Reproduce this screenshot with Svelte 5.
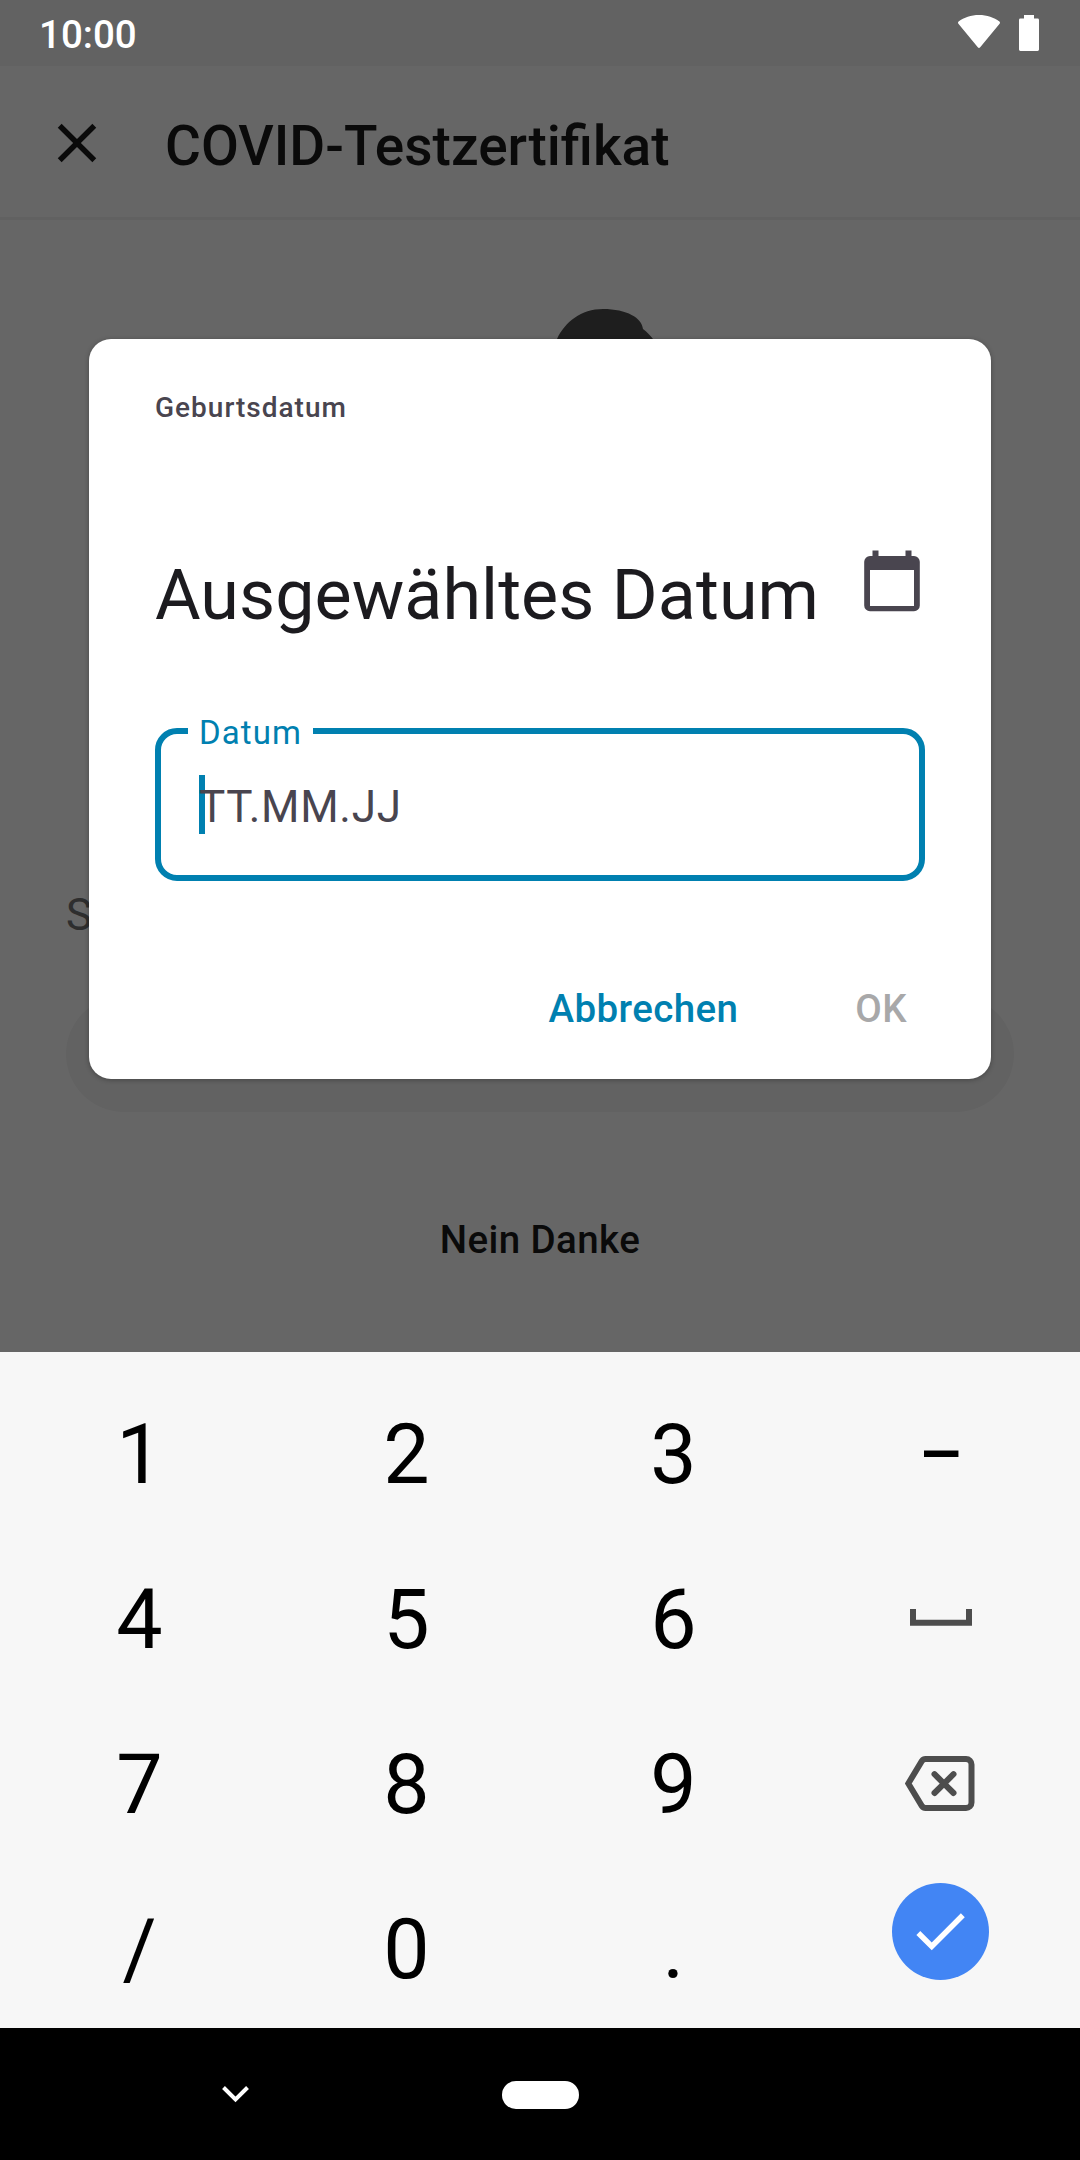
<script>
  const keys = [
    '1', '2', '3', '–',
    '4', '5', '6', 'space',
    '7', '8', '9', 'backspace',
    '/', '0', '.', 'done'
  ];
</script>

<div class="screen">
  <div class="app">
    <div class="status-bg"></div>
    <header class="app-bar">
      <svg class="close" viewBox="0 0 24 24">
        <path d="M19 6.41 17.59 5 12 10.59 6.41 5 5 6.41 10.59 12 5 17.59 6.41 19 12 13.41 17.59 19 19 17.59 13.41 12z" />
      </svg>
      <h1>COVID-Testzertifikat</h1>
    </header>
    <main>
      <svg class="illustration" viewBox="0 0 96 60">
        <path d="M0 30C8 13 24 0 46 0c24 0 39 9 40 20 4 3 7 6 10 10v30H0z" />
      </svg>
      <p class="hint">S</p>
      <div class="primary"></div>
      <button class="decline">Nein Danke</button>
    </main>
    <div class="scrim"></div>
  </div>

  <section class="keyboard">
    {#each keys as key}
      <div class="key" class:dash={key === '–'}>
        {#if key === 'space'}
          <svg class="space" viewBox="0 0 62 17">
            <path d="M3 0v13.8h56V0" />
          </svg>
        {:else if key === 'backspace'}
          <svg class="backspace" viewBox="0 0 70 55">
            <path d="M20.500 3h40.500a5.500 5.500 0 0 1 5.500 5.500v38a5.500 5.500 0 0 1-5.500 5.500H20.500q-2.200 0-3.600-2L3.300 27.500 16.900 5Q18.300 3 20.500 3z" />
            <path class="cross" d="m29.500 18.200 19 18.800m0-18.800-19 18.800" />
          </svg>
        {:else if key === 'done'}
          <span class="done">
            <svg viewBox="0 0 24 24"><path d="M9 16.170 4.830 12l-1.420 1.410L9 19 21 7l-1.410-1.410z" /></svg>
          </span>
        {:else}
          {key}
        {/if}
      </div>
    {/each}
  </section>

  <nav>
    <svg class="chevron" viewBox="0 0 27 17"><path d="m1.500 1.500 12 12 12-12" /></svg>
    <span class="home"></span>
  </nav>

  <div class="status">
    <span>10:00</span>
    <div class="indicators">
      <svg class="wifi" viewBox="0 0 42 33">
        <path d="M.6 6.500C6 2.500 13 0 21 0s15 2.500 20.400 6.500c.7.600.8 1.500.2 2.200L22.200 32.200c-.7.900-1.700.9-2.400 0L.4 8.700C-.2 8-.1 7.100.6 6.500z" />
      </svg>
      <svg class="battery" viewBox="0 0 20 36">
        <path d="M5 0h10v3.500h3.600q1.400 0 1.400 1.400v29.700q0 1.400-1.400 1.400H1.400Q0 36 0 34.600V4.900q0-1.400 1.400-1.400H5z" />
      </svg>
    </div>
  </div>

  <div class="dialog">
    <div class="overline">Geburtsdatum</div>
    <div class="headline">
      <h2>Ausgewähltes Datum</h2>
      <svg class="calendar" viewBox="0 0 56 62">
        <path fill-rule="evenodd" d="M8.500.5h6v5.500h27V.5h6v5.500H50a5.800 5.800 0 0 1 5.800 5.800V55.500a5.800 5.800 0 0 1-5.800 5.800H6A5.800 5.800 0 0 1 .2 55.500V11.800A5.800 5.800 0 0 1 6 6h2.500zM6 20v36h44V20z" />
      </svg>
    </div>
    <div class="field">
      <span class="label">Datum</span>
      <span class="caret"></span>
      <span class="placeholder">TT.MM.JJ</span>
    </div>
    <div class="actions">
      <button class="cancel">Abbrechen</button>
      <button class="ok" disabled>OK</button>
    </div>
  </div>
</div>

<style>
  :global(body) {
    margin: 0;
    background: #000;
  }

  .screen {
    position: relative;
    display: flex;
    flex-direction: column;
    width: 1080px;
    height: 2160px;
    overflow: hidden;
    font-family: Roboto, sans-serif;
  }

  h1, h2, p {
    margin: 0;
  }

  svg {
    display: block;
    flex: none;
  }

  button {
    padding: 0;
    border: 0;
    background: none;
    font: 500 38.5px/46px Roboto, sans-serif;
    letter-spacing: 0.4px;
  }

  .app {
    position: relative;
    display: flex;
    flex-direction: column;
    height: 1352px;
    background: #fff;
  }

  .status-bg {
    height: 66px;
    background: #f5f5f5;
  }

  .app-bar {
    display: flex;
    box-sizing: border-box;
    height: 154px;
    padding: 44px 44px 0;
    border-bottom: 3px solid #f3f3f3;
    color: #1a1a1a;
  }

  .close {
    width: 66px;
    height: 66px;
    fill: #1a1a1a;
  }

  h1 {
    margin: 3px 0 0 55px;
    font-size: 55px;
    font-weight: 500;
    line-height: 66px;
  }

  main {
    display: flex;
    flex-direction: column;
    padding: 89px 66px 0;
  }

  .illustration {
    width: 96px;
    height: 60px;
    margin-left: 491px;
    fill: #4d4d4d;
  }

  .hint {
    margin-top: 520px;
    color: #737373;
    font-size: 44px;
    line-height: 52px;
  }

  .primary {
    height: 116px;
    margin-top: 55px;
    border-radius: 58px;
    background: #f5f5f5;
  }

  .decline {
    align-self: center;
    margin-top: 105px;
    color: #1a1a1a;
  }

  .scrim {
    position: absolute;
    inset: 0;
    background: rgba(0, 0, 0, 0.6);
  }

  .keyboard {
    display: grid;
    grid-template-columns: repeat(4, 267px);
    grid-template-rows: repeat(4, 165px);
    box-sizing: border-box;
    height: 676px;
    padding: 20px 6px 0;
    background: #f7f7f7;
  }

  .key {
    display: flex;
    align-items: center;
    justify-content: center;
    color: #000;
    font-size: 82.5px;
    line-height: 97px;
  }

  .dash {
    padding-left: 1px;
    font-size: 69px;
    font-weight: 500;
  }

  .space {
    width: 62px;
    height: 17px;
    margin-top: -5px;
    fill: none;
    stroke: #4d4d4d;
    stroke-width: 6;
  }

  .backspace {
    width: 70px;
    height: 55px;
    margin: 0 2px 2px 0;
    fill: none;
    stroke: #4d4d4d;
    stroke-width: 6;
  }

  .cross {
    stroke-linecap: round;
  }

  .done {
    display: flex;
    align-items: center;
    justify-content: center;
    width: 97px;
    height: 97px;
    margin-bottom: 37px;
    border-radius: 50%;
    background: #4285f4;
  }

  .done svg {
    width: 66px;
    height: 66px;
    margin-right: 1px;
    fill: #fff;
  }

  nav {
    display: flex;
    align-items: center;
    box-sizing: border-box;
    height: 132px;
    padding-left: 222px;
    background: #000;
  }

  .chevron {
    width: 27px;
    height: 17px;
    fill: none;
    stroke: #fff;
    stroke-width: 4;
  }

  .home {
    width: 77px;
    height: 28px;
    margin: 1px 0 0 253px;
    border-radius: 14px;
    background: #fff;
  }

  .status {
    position: absolute;
    top: 0;
    left: 0;
    display: flex;
    justify-content: space-between;
    box-sizing: border-box;
    width: 100%;
    height: 66px;
    padding: 0 41px 0 39px;
    color: #fff;
    font-size: 38.5px;
    font-weight: 500;
    line-height: 69px;
  }

  .indicators {
    display: flex;
    gap: 19px;
    padding-top: 15px;
    fill: #fff;
  }

  .wifi {
    width: 42px;
    height: 33px;
  }

  .battery {
    width: 20px;
    height: 36px;
  }

  .dialog {
    position: absolute;
    top: 339px;
    left: 89px;
    display: flex;
    flex-direction: column;
    box-sizing: border-box;
    width: 902px;
    height: 740px;
    padding: 51px 66px 0;
    border-radius: 22px;
    background: #fff;
    box-shadow: 0 1px 5px rgba(0, 0, 0, 0.3);
  }

  .overline {
    color: #49454f;
    font-size: 28px;
    font-weight: 500;
    letter-spacing: 1px;
    line-height: 36px;
  }

  .headline {
    display: flex;
    justify-content: space-between;
    height: 82px;
    margin-top: 124px;
    padding-right: 5px;
  }

  h2 {
    margin-top: 4px;
    color: #1c1b1f;
    font-size: 70px;
    font-weight: 400;
    letter-spacing: 0.05px;
    line-height: 82px;
    white-space: nowrap;
  }

  .calendar {
    width: 56px;
    height: 62px;
    fill: #49454f;
  }

  .field {
    position: relative;
    box-sizing: border-box;
    height: 153px;
    margin-top: 96px;
    padding: 47px 0 0 38px;
    border: 6px solid #0080b0;
    border-radius: 22px;
    color: #49454f;
    font-size: 44px;
    letter-spacing: 0.75px;
    line-height: 52px;
  }

  .label {
    position: absolute;
    top: -21px;
    left: 27px;
    box-sizing: border-box;
    width: 125px;
    padding-left: 11px;
    background: #fff;
    color: #0080b0;
    font-size: 33px;
    letter-spacing: 1.1px;
    line-height: 39px;
  }

  .caret {
    position: absolute;
    top: 41px;
    left: 38px;
    width: 6px;
    height: 59px;
    background: #0080b0;
  }

  .placeholder {
    position: relative;
  }

  .actions {
    display: flex;
    justify-content: flex-end;
    gap: 117px;
    margin-top: 105px;
    padding-right: 18px;
  }

  .cancel {
    color: #0080b0;
  }

  .ok {
    color: #a8a8a9;
  }
</style>
